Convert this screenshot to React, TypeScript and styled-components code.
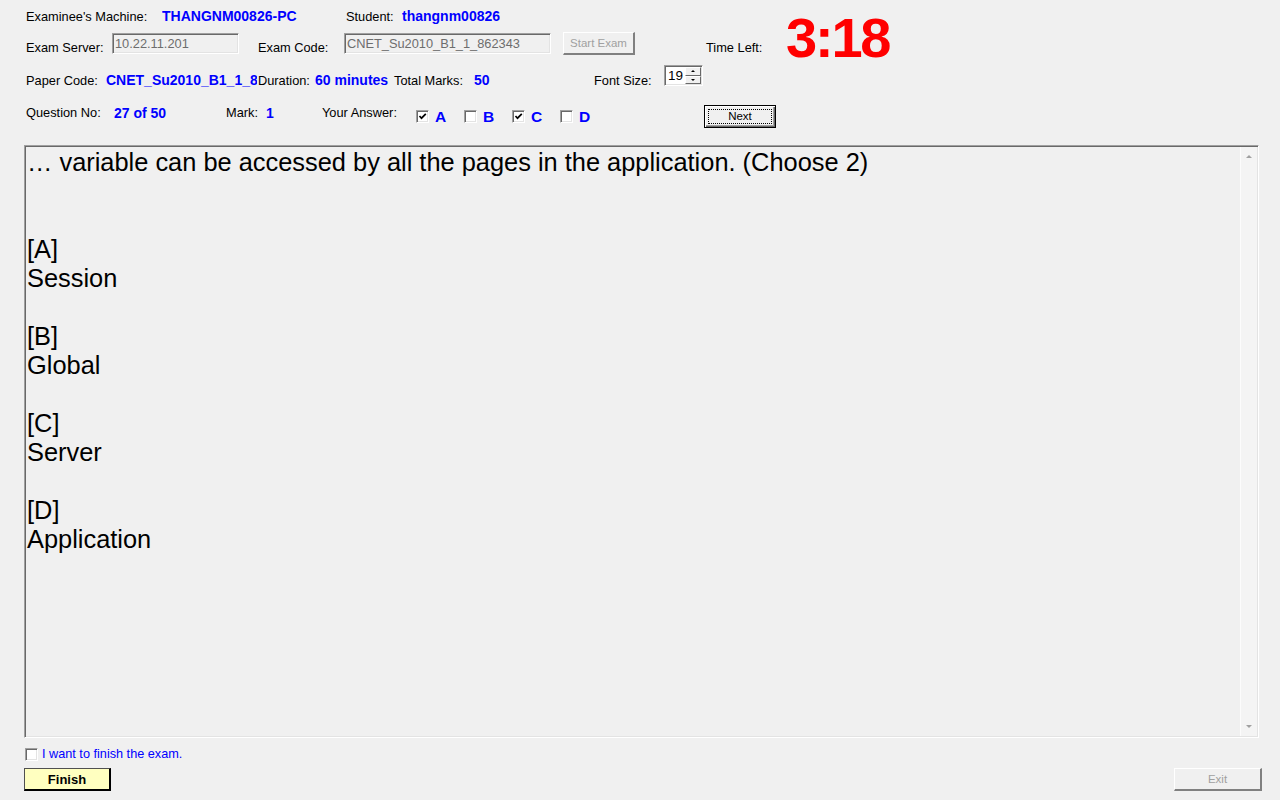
import React from 'react';
import styled, { createGlobalStyle, css } from 'styled-components';

const GlobalStyle = createGlobalStyle`
  html, body { margin: 0; padding: 0; background: #f0f0f0; }
  body { font-family: "Liberation Sans", Arial, sans-serif; }
`;

const sunken = css`
  border: 1px solid;
  border-color: #a0a0a0 #ffffff #ffffff #a0a0a0;
  box-shadow: inset 1px 1px 0 #696969, inset -1px -1px 0 #e3e3e3;
`;

const Window = styled.div`
  width: 1280px;
  height: 800px;
  box-sizing: border-box;
  background: #f0f0f0;
  overflow: hidden;
  display: flex;
  flex-direction: column;
  padding: 0 18px 0 24px;
`;

const Header = styled.div`
  display: flex;
  flex-direction: column;
  padding-left: 2px;
`;

const TopBlock = styled.div`
  display: flex;
  align-items: flex-start;
  padding-top: 6px;
`;

const LeftCol = styled.div`
  width: 760px;
  display: flex;
  flex-direction: column;
`;

const Row = styled.div<{ $mt?: number; $h: number; $align: string }>`
  display: flex;
  margin-top: ${(p) => p.$mt ?? 0}px;
  height: ${(p) => p.$h}px;
  align-items: ${(p) => p.$align};
`;

const Label = styled.span<{ $w?: number; $ml?: number; $mb?: number; $mt?: number }>`
  flex-shrink: 0;
  ${(p) => (p.$w ? `width: ${p.$w}px;` : '')}
  margin-left: ${(p) => p.$ml ?? 0}px;
  margin-bottom: ${(p) => p.$mb ?? 0}px;
  margin-top: ${(p) => p.$mt ?? 0}px;
  font-size: 12.8px;
  line-height: 15px;
  color: #000;
  white-space: nowrap;
`;

const Value = styled.span<{ $w?: number; $mt?: number }>`
  flex-shrink: 0;
  ${(p) => (p.$w ? `width: ${p.$w}px;` : '')}
  margin-top: ${(p) => p.$mt ?? 0}px;
  font-size: 14px;
  font-weight: bold;
  line-height: 16px;
  color: #0000ff;
  white-space: nowrap;
  overflow: hidden;
`;

const TextBox = styled.div<{ $w: number; $ml?: number }>`
  ${sunken};
  box-sizing: border-box;
  width: ${(p) => p.$w}px;
  height: 21px;
  margin-left: ${(p) => p.$ml ?? 0}px;
  margin-bottom: 2px;
  background: #f0f0f0;
  padding-left: 2px;
  display: flex;
  align-items: center;
  font-size: 12.8px;
  color: #6d6d6d;
  white-space: nowrap;
  overflow: hidden;
`;

const ClassicButton = styled.div<{ $w: number; $ml?: number; $mb?: number }>`
  box-sizing: border-box;
  width: ${(p) => p.$w}px;
  height: 23px;
  margin-left: ${(p) => p.$ml ?? 0}px;
  margin-bottom: ${(p) => p.$mb ?? 0}px;
  display: flex;
  align-items: center;
  justify-content: center;
  font-size: 11.5px;
  flex-shrink: 0;
`;

const DisabledButton = styled(ClassicButton)`
  background: #f0f0f0;
  color: #a0a0a0;
  border-top: 1px solid #ffffff;
  border-left: 1px solid #ffffff;
  border-right: 2px solid #808080;
  border-bottom: 2px solid #808080;
`;

const DefaultButton = styled(ClassicButton)`
  background: #f0f0f0;
  color: #000;
  border: 1px solid #000;
  box-shadow: inset 1px 1px 0 #ffffff, inset -1px -1px 0 #696969, inset -2px -2px 0 #a0a0a0;
  position: relative;
  &::after {
    content: '';
    position: absolute;
    left: 3px;
    top: 3px;
    right: 3px;
    bottom: 3px;
    border: 1px dotted #000;
  }
`;

const FinishButton = styled(ClassicButton)`
  background: #ffffc0;
  color: #000;
  font-size: 13px;
  font-weight: bold;
  border-top: 1px solid #505050;
  border-left: 1px solid #505050;
  border-right: 2px solid #000;
  border-bottom: 2px solid #000;
`;

const Clock = styled.div`
  margin-top: 8px;
  font-size: 56px;
  font-weight: bold;
  line-height: 48px;
  color: #ff0000;
  letter-spacing: -2.2px;
  white-space: nowrap;
`;

const Spinner = styled.div`
  ${sunken};
  box-sizing: border-box;
  width: 39px;
  height: 21px;
  margin-bottom: 2px;
  background: #fff;
  display: flex;
  padding: 1px;
`;

const SpinValue = styled.div`
  flex: 1;
  padding-left: 2px;
  font-size: 13.5px;
  line-height: 17px;
  color: #000;
`;

const SpinButtons = styled.div`
  width: 16px;
  display: flex;
  flex-direction: column;
`;

const SpinButton = styled.div`
  flex: 1;
  box-sizing: border-box;
  background: #f0f0f0;
  border-top: 1px solid #fff;
  border-left: 1px solid #fff;
  border-right: 1px solid #696969;
  border-bottom: 1px solid #696969;
  display: flex;
  align-items: center;
  justify-content: center;
`;

const Tri = styled.span<{ $dir: 'up' | 'down'; $color?: string; $size?: number }>`
  width: 0;
  height: 0;
  border-left: ${(p) => p.$size ?? 2}px solid transparent;
  border-right: ${(p) => p.$size ?? 2}px solid transparent;
  ${(p) =>
    p.$dir === 'up'
      ? `border-bottom: ${p.$size ?? 2}px solid ${p.$color ?? '#000'};`
      : `border-top: ${p.$size ?? 2}px solid ${p.$color ?? '#000'};`}
`;

const Option = styled.div`
  width: 48px;
  flex-shrink: 0;
  display: flex;
  align-items: center;
  gap: 6px;
  align-self: center;
  margin-top: 1px;
`;

const Box = styled.div`
  ${sunken};
  box-sizing: border-box;
  width: 13px;
  height: 13px;
  background: #fff;
  flex-shrink: 0;
  display: flex;
  align-items: center;
  justify-content: center;
`;

const Letter = styled.span`
  font-size: 15.5px;
  font-weight: bold;
  color: #0000ff;
  line-height: 16px;
`;

const NextWrap = styled.div`
  align-self: center;
`;

const QuestionPanel = styled.div`
  ${sunken};
  box-sizing: border-box;
  margin-top: 17px;
  margin-right: 3px;
  height: 593px;
  display: flex;
  background: #f0f0f0;
`;

const QuestionText = styled.div`
  flex: 1;
  padding: 2px 0 0 2px;
  font-size: 25.4px;
  line-height: 29px;
  color: #000;
  white-space: pre-line;
`;

const ScrollBar = styled.div`
  width: 16px;
  margin: 1px 1px 1px 0;
  background: #f4f4f4;
  border-left: 1px solid #fcfcfc;
  display: flex;
  flex-direction: column;
  justify-content: space-between;
  align-items: center;
  padding: 8px 0;
`;

const FinishRow = styled.div`
  margin-top: 10px;
  height: 13px;
  display: flex;
  align-items: center;
  gap: 4px;
  padding-left: 1px;
`;

const FinishLabel = styled.span`
  font-size: 12.7px;
  line-height: 13px;
  color: #0000ff;
`;

const BottomBar = styled.div`
  margin-top: 7px;
  display: flex;
  justify-content: space-between;
  align-items: center;
`;

const Check = () => (
  <svg width="9" height="9" viewBox="0 0 9 9">
    <polyline points="1.5,4 3.5,6.2 7.8,1.8" fill="none" stroke="#000" strokeWidth="1.7" />
  </svg>
);

const CheckBox = ({ checked }: { checked?: boolean }) => <Box>{checked ? <Check /> : null}</Box>;

const question = `… variable can be accessed by all the pages in the application. (Choose 2)


[A]
Session

[B]
Global

[C]
Server

[D]
Application`;

const answers: { letter: string; checked: boolean }[] = [
  { letter: 'A', checked: true },
  { letter: 'B', checked: false },
  { letter: 'C', checked: true },
  { letter: 'D', checked: false },
];

export default function App() {
  return (
    <>
      <GlobalStyle />
      <Window>
        <Header>
          <TopBlock>
            <LeftCol>
              <Row $h={20} $align="center">
                <Label $w={136}>Examinee's Machine:</Label>
                <Value $w={184}>THANGNM00826-PC</Value>
                <Label $w={56}>Student:</Label>
                <Value>thangnm00826</Value>
              </Row>
              <Row $mt={6} $h={24} $align="flex-end">
                <Label $w={86} $mb={1}>Exam Server:</Label>
                <TextBox $w={127}>10.22.11.201</TextBox>
                <Label $w={86} $ml={19} $mb={1}>Exam Code:</Label>
                <TextBox $w={207}>CNET_Su2010_B1_1_862343</TextBox>
                <DisabledButton $w={72} $ml={12} $mb={1}>Start Exam</DisabledButton>
                <Label $ml={71} $mb={1}>Time Left:</Label>
              </Row>
            </LeftCol>
            <Clock>3:18</Clock>
          </TopBlock>
          <Row $mt={2} $h={24} $align="flex-end">
            <Label $w={80}>Paper Code:</Label>
            <Value $w={151}>CNET_Su2010_B1_1_862343</Value>
            <Label $w={57} $ml={1}>Duration:</Label>
            <Value $w={79}>60 minutes</Value>
            <Label $w={80}>Total Marks:</Label>
            <Value $w={120}>50</Value>
            <Label $w={70}>Font Size:</Label>
            <Spinner>
              <SpinValue>19</SpinValue>
              <SpinButtons>
                <SpinButton>
                  <Tri $dir="up" />
                </SpinButton>
                <SpinButton>
                  <Tri $dir="down" />
                </SpinButton>
              </SpinButtons>
            </Spinner>
          </Row>
          <Row $mt={16} $h={24} $align="flex-start">
            <Label $w={88} $mt={1}>Question No:</Label>
            <Value $w={112} $mt={1}>27 of 50</Value>
            <Label $w={40} $mt={1}>Mark:</Label>
            <Value $w={56} $mt={1}>1</Value>
            <Label $w={94} $mt={1}>Your Answer:</Label>
            {answers.map((a) => (
              <Option key={a.letter}>
                <CheckBox checked={a.checked} />
                <Letter>{a.letter}</Letter>
              </Option>
            ))}
            <NextWrap>
              <DefaultButton $w={72} $ml={96}>Next</DefaultButton>
            </NextWrap>
          </Row>
        </Header>
        <QuestionPanel>
          <QuestionText>{question}</QuestionText>
          <ScrollBar>
            <Tri $dir="up" $color="#a0a0a0" $size={3} />
            <Tri $dir="down" $color="#a0a0a0" $size={3} />
          </ScrollBar>
        </QuestionPanel>
        <FinishRow>
          <CheckBox />
          <FinishLabel>I want to finish the exam.</FinishLabel>
        </FinishRow>
        <BottomBar>
          <FinishButton $w={87}>Finish</FinishButton>
          <DisabledButton $w={88}>Exit</DisabledButton>
        </BottomBar>
      </Window>
    </>
  );
}
